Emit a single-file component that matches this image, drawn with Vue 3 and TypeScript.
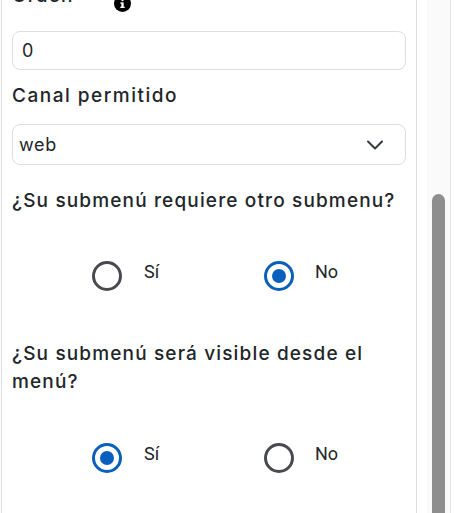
<script setup lang="ts">
interface Group { question: string; selected: string }
const groups: Group[] = [
  { question: '¿Su submenú requiere otro submenu?', selected: 'No' },
  { question: '¿Su submenú será visible desde el menú?', selected: 'Sí' },
]
const options = ['Sí', 'No']
</script>

<template>
  <div class="page">
    <main class="card">
      <div class="label-row">
        <label class="label">Orden</label>
        <svg class="info" viewBox="0 0 16 16" width="17" height="17">
          <circle cx="8" cy="8" r="8" fill="#000" />
          <rect x="6.9" y="7" width="2.2" height="5" fill="#fff" />
          <rect x="5.9" y="11" width="4.2" height="1.2" fill="#fff" />
          <rect x="5.9" y="7" width="2" height="1.1" fill="#fff" />
          <circle cx="8" cy="4.6" r="1.2" fill="#fff" />
        </svg>
      </div>
      <div class="field input">0</div>
      <label class="label canal">Canal permitido</label>
      <div class="field select">
        <span>web</span>
        <svg viewBox="0 0 16 10" width="16" height="10" fill="none" stroke="#343a40" stroke-width="2" stroke-linecap="round" stroke-linejoin="round">
          <path d="M1 1.5 8 8.5 15 1.5" />
        </svg>
      </div>
      <section v-for="g in groups" :key="g.question" class="group">
        <p class="label question">{{ g.question }}</p>
        <div class="options">
          <div v-for="o in options" :key="o" class="option">
            <span class="radio" :class="{ on: g.selected === o }"></span>
            <span class="opt-text">{{ o }}</span>
          </div>
        </div>
      </section>
    </main>
    <aside class="track"><div class="thumb"></div></aside>
  </div>
</template>

<style>
html, body { margin: 0; background: #fff; overflow: hidden; }
</style>

<style scoped>
.page {
  width: 454px;
  height: 513px;
  overflow: hidden;
  display: flex;
  background: #fff;
  font-family: Roboto, "Liberation Sans", sans-serif;
  color: #212529;
}
.card {
  box-sizing: border-box;
  width: 416px;
  height: 513px;
  margin-left: 1px;
  padding: 0 10px 0 10px;
  border-left: 1px solid #dedede;
  border-right: 1px solid #dedede;
  overflow: hidden;
}
.label-row {
  display: flex;
  height: 31px;
  margin-top: -18px;
  margin-bottom: 18px;
  align-items: flex-start;
}
.label {
  display: block;
  margin: 0;
  font-family: Inter, sans-serif;
  font-size: 19px;
  font-weight: 500;
  line-height: 28px;
  letter-spacing: 1.15px;
  color: #212529;
}
.label-row .label { width: 102px; }
.info { margin-top: 13px; margin-left: 0; }
.field {
  box-sizing: border-box;
  width: 394px;
  border: 1px solid #dedede;
  border-radius: 8px;
  font-family: Inter, sans-serif;
  font-size: 18px;
  letter-spacing: 0.7px;
  background: #fff;
  color: #212529;
  display: flex;
  align-items: center;
}
.input { height: 39px; padding-left: 9px; }
.canal { margin-top: 12px; margin-bottom: 14px; letter-spacing: 1.5px; }
.select {
  height: 41px;
  padding: 0 22px 0 6px;
  justify-content: space-between;
}
.group { margin-top: 22px; }
.group:last-of-type { margin-top: 43px; }
.question { line-height: 28px; }
.options {
  display: flex;
  margin-top: 46px;
  padding-left: 80px;
  height: 36px;
}
.group:last-of-type .options { margin-top: 47px; }
.option {
  flex: none;
  width: 172px;
  display: flex;
  align-items: flex-start;
}
.radio {
  box-sizing: border-box;
  flex: none;
  width: 30px;
  height: 30px;
  border: 3px solid #484a50;
  border-radius: 50%;
  background: #fff;
  display: flex;
  align-items: center;
  justify-content: center;
}
.radio.on { border-color: #0a5fbd; }
.radio.on::after {
  content: "";
  width: 14px;
  height: 14px;
  border-radius: 50%;
  background: #0a5fbd;
}
.opt-text {
  margin-left: 22px;
  margin-top: -1px;
  line-height: 24px;
  font-size: 18px;
  color: #212529;
}
.option + .option .opt-text { margin-left: 21px; }
.track {
  box-sizing: border-box;
  width: 24px;
  height: 513px;
  margin-left: 10px;
  padding: 194px 5px 0 5px;
  background: #fafafa;
  border-right: 1px solid #e4e4e4;
}
.thumb {
  width: 13px;
  height: 340px;
  border-radius: 7px 7px 0 0;
  background: #8e8e8e;
}
</style>
